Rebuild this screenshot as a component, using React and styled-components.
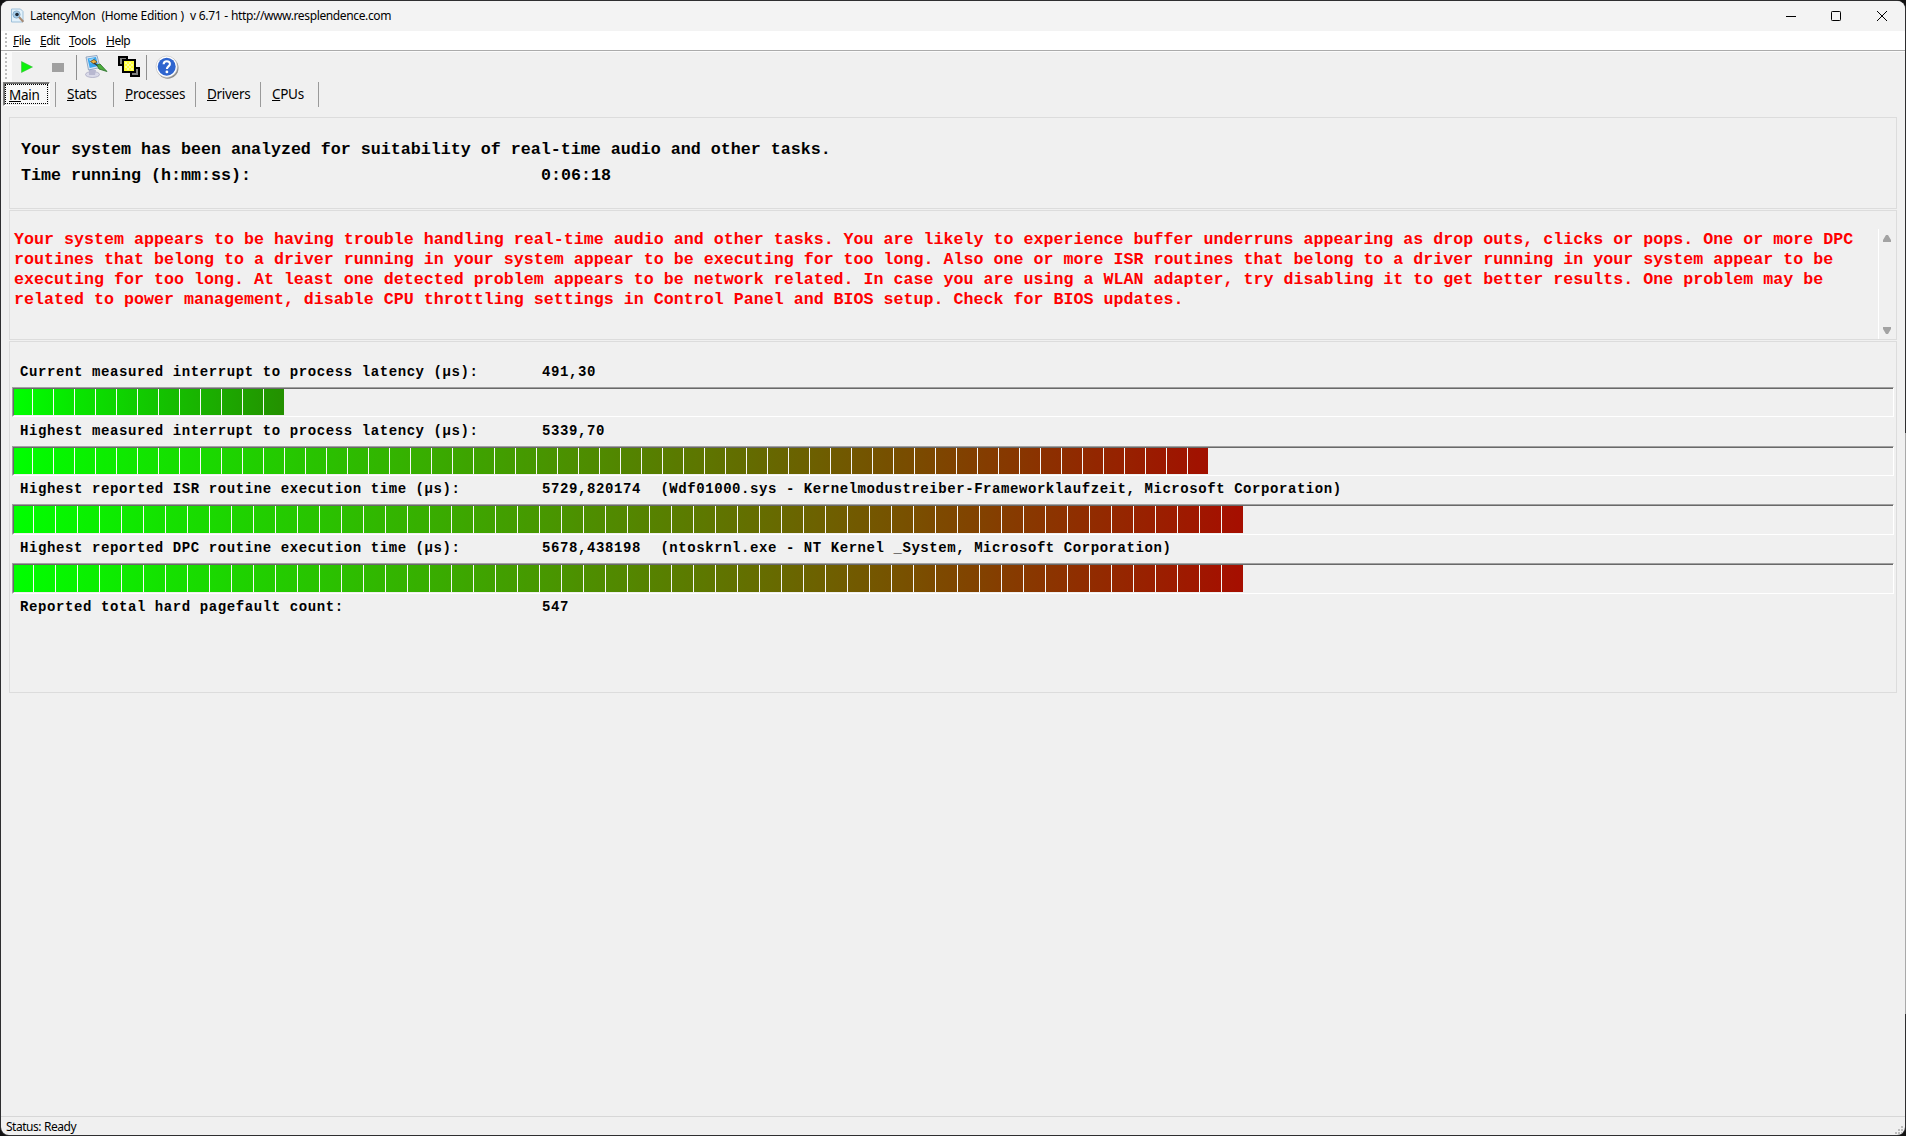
import React from 'react';
import styled, { createGlobalStyle } from 'styled-components';

const Global = createGlobalStyle`
  * { box-sizing: border-box; }
  html, body, #root { height: 100%; margin: 0; }
  body { background: #111; overflow: hidden; }
`;
const UI = '"Noto Sans", "Open Sans", sans-serif';
const MONO = '"Liberation Mono", monospace';

const Frame = styled.div`
  width: 1906px; height: 1136px; padding: 1px;
  border-radius: 9px;
  background:
    linear-gradient(#a9a9a9, #a9a9a9) 100% 433px / 1px 581px no-repeat,
    #2e2e30;
`;
const Window = styled.div`
  height: 100%;
  display: flex; flex-direction: column;
  border-radius: 8px;
  background: #f0f0f0;
  overflow: hidden;
  color: #000;
  font-family: ${UI};
`;
const TitleBar = styled.header`
  height: 30px; flex: none;
  display: flex; align-items: center;
  background: #f3f3f3;
  padding-left: 9px;
  svg { display: block; flex: none; }
`;
const Title = styled.div`
  flex: 1; margin-left: 5px;
  font-size: 12px; line-height: 16px; white-space: pre;
  letter-spacing: -0.37px; word-spacing: 0.4px;
`;
const Caption = styled.div`
  width: ${p => p.$w}px; height: 30px; display: grid; place-items: center;
`;
const MenuBar = styled.nav`
  height: 21px; flex: none;
  display: flex; align-items: center;
  background: #fff;
  border-bottom: 1px solid #fbfbfb;
  box-shadow: inset 0 -1px 0 #ababab;
  gap: 11px;
  font-size: 12px;
`;
const Menu = styled.span`
  letter-spacing: -0.5px; line-height: 16px; width: ${p => p.$w}px; white-space: nowrap;
`;
const Grip = styled.i`
  width: 2px; height: ${p => p.$h}px; flex: none; margin: 0 ${p => p.$after}px 0 4px;
  background: repeating-linear-gradient(#bdbdbd 0 2px, transparent 2px 4px);
`;
const ToolBar = styled.div`
  height: 30px; flex: none;
  display: flex; align-items: center;
  background: linear-gradient(90deg, #fafafa 0 11px, #f0f0f0 11px);
  svg { display: block; flex: none; }
`;
const ToolButton = styled.div`
  width: ${p => p.$w}px; height: 26px; display: grid; place-items: center; flex: none;
`;
const Rule = styled.i`
  width: 1px; height: 25px; background: #8f8f8f; flex: none; margin-left: ${p => p.$gap}px;
`;
const Tabs = styled.div`
  height: 26px; flex: none; display: flex; align-items: flex-start; padding-left: 2px;
`;
const Tab = styled.div`
  height: 25px; width: ${p => p.$w}px; flex: none;
  padding-left: ${p => p.$pad}px;
  border-right: 1px solid #9a9a9a;
  font-size: 13.5px; line-height: 24px; letter-spacing: -0.3px; white-space: nowrap;
`;
const ActiveTab = styled.div`
  width: 47px; height: 24px; flex: none;
  border: 1px solid #fff; border-top-color: #808080; border-left-color: #808080;
  box-shadow: inset 1px 1px 0 #696969;
  padding: 1px;
`;
const Focus = styled.div`
  height: 20px; border: 1px dotted #000; background: #f8f8f8;
  padding-left: 3px; font-size: 13.5px; line-height: 20px; letter-spacing: -0.3px;
`;
const Body = styled.main`
  flex: 1; padding: 9px 8px 0; display: flex; flex-direction: column; gap: 1px;
`;
const Panel = styled.section`
  border: 1px solid #dcdcdc; height: ${p => p.$h}px; flex: none;
`;
const Summary = styled.div`
  padding: 19px 11px; font: bold 16.667px/26px ${MONO}; white-space: pre;
`;
const SummaryRow = styled.div`
  display: grid; grid-template-columns: 520px 1fr;
`;
const Warning = styled.div`
  height: 110px; margin: 18px 0 0 4px; display: flex; justify-content: space-between;
  font: bold 16.667px/20px ${MONO}; color: #f00; white-space: pre;
`;
const WarningText = styled.p`
  margin: 0; padding-top: 1px;
`;
const Scroll = styled.div`
  width: 18px; border-left: 1px solid #fff; flex: none;
  display: flex; flex-direction: column; justify-content: space-between; align-items: center;
  padding: 6px 2px 5px 0;
  svg { display: block; }
`;
const Metrics = styled.div`
  padding: 18px 2px 0;
`;
const MetricLabel = styled.div`
  height: ${p => p.$h}px; padding: ${p => p.$top}px 0 0 8px;
  display: grid; grid-template-columns: 522px auto 1fr;
  font: bold 14px/18px ${MONO}; letter-spacing: 0.59px; white-space: pre;
`;
const Detail = styled.span`
  margin-left: 19.5px; letter-spacing: 0.563px;
`;
const Track = styled.div`
  height: ${p => p.$h}px;
  border-top: 1px solid #a0a0a0; border-left: 1px solid #a0a0a0; border-bottom: 1px solid #fff; border-right: 1px solid #fff;
`;
const Inner = styled.div`
  height: 100%; display: flex; gap: 1px;
  border-top: 1px solid #696969; border-left: 1px solid #696969; border-bottom: 1px solid #f0f0f0;
`;
const Block = styled.i`
  width: ${p => p.$w}px; height: 100%; flex: none;
  box-shadow: 1px 0 0 ${p => (p.$last ? 'transparent' : '#f8f8f8')};
`;
const StatusBar = styled.footer`
  height: 19px; flex: none; display: flex; justify-content: space-between; align-items: flex-start;
  border-top: 1px solid #d7d7d7; padding-left: 5px;
  font-size: 12px; line-height: 20px; letter-spacing: -0.5px; word-spacing: 0.6px;
  svg { display: block; margin: 9px 2px 0 0; }
`;

function mix(a, b, t) {
  return `rgb(${a.map((v, i) => Math.round(v + (b[i] - v) * t)).join(',')})`;
}

function Meter({ h, first, step, count, end }) {
  const total = first + count * step;
  const start = [0, 255, 0];
  const blocks = Array.from({ length: count + 1 }, (_, i) => {
    const x0 = i === 0 ? 0 : first + 1 + (i - 1) * step;
    const w = i === 0 ? first : step - 1;
    return { w, a: mix(start, end, x0 / total), b: mix(start, end, (x0 + w) / total) };
  });
  return (
    <Track $h={h}>
      <Inner>
        {blocks.map((b, i) => (
          <Block key={i} $w={b.w} $last={i === count} style={{ background: `linear-gradient(90deg, ${b.a}, ${b.b})` }} />
        ))}
      </Inner>
    </Track>
  );
}

const Logo = () => (
  <svg width="15" height="16" viewBox="0 0 15 16">
    <path d="M1.5 1h9l2.5 2.5V14H1.5z" fill="#e2f1fb" stroke="#9dbfd9" />
    <circle cx="6.5" cy="6.5" r="3.6" fill="#a5cdea" stroke="#8fb0cb" />
    <circle cx="7" cy="6.5" r="1.8" fill="#202b38" />
    <path d="M9 9l4.3 4.7" stroke="#a88a72" strokeWidth="2" />
  </svg>
);
const Play = () => (
  <svg width="12" height="12"><path d="M0.5 0.5L11.5 6L0.5 11.5Z" fill="#0df20d" stroke="#35b535" strokeWidth=".5" /></svg>
);
const Stop = () => <svg width="12" height="9"><path d="M0 0h12v9H0z" fill="#a0a0a0" /></svg>;
const Options = () => (
  <svg width="24" height="24" viewBox="0 0 24 24">
    <ellipse cx="8.5" cy="19.5" rx="7" ry="3" fill="#d9d9e8" stroke="#a3a3bd" strokeWidth=".7" />
    <path d="M5 14l7 1-1 5H5z" fill="#b8b8d0" />
    <path d="M2 2l11-1.5 3 12L4.5 15z" fill="#dce8f5" stroke="#8097b5" strokeWidth=".8" />
    <path d="M3.5 3.5L12 2l2.4 9L5.7 13z" fill="#3ba7ee" />
    <path d="M5 4l5-1-3 6z" fill="#8fd4ff" />
    <path d="M6.5 6.5l3.5-2 3 2.5-3 2z" fill="#f0b43b" stroke="#6a4b1b" strokeWidth=".8" />
    <path d="M10 8l4 3" stroke="#333" strokeWidth="1.4" />
    <path d="M13 10l3-1 7 7.5-8-2.5z" fill="#4dad3c" stroke="#256d26" strokeWidth=".8" />
  </svg>
);
const Layers = () => (
  <svg width="22" height="22" viewBox="0 0 22 22" shapeRendering="crispEdges">
    <path d="M1 1h8v8H1zM13 12h8v8h-8z" fill="#808080" stroke="#000" strokeWidth="1.5" />
    <path d="M5 4h12v12H5z" fill="#ffff38" stroke="#000" strokeWidth="2" />
    <path d="M7 6h2v2H7zM11 6h2v2h-2zM9 8h2v2H9zM13 8h2v2h-2zM7 10h2v2H7zM11 10h2v2h-2zM9 12h2v2H9zM13 12h2v2h-2z" fill="#ffff9c" />
  </svg>
);
const Help = () => (
  <svg width="24" height="24" viewBox="0 0 24 24">
    <circle cx="12.7" cy="12.9" r="10.8" fill="#8c8c8c" />
    <circle cx="11.7" cy="11.7" r="10.7" fill="#fff" stroke="#bdbdbd" strokeWidth=".6" />
    <circle cx="11.7" cy="11.7" r="9" fill="#2f65cf" />
    <path d="M8.6 9.2c.2-4 6.3-3.8 6.3-.3 0 2.5-3 2.5-3 5.1" fill="none" stroke="#fff" strokeWidth="2.1" />
    <circle cx="11.9" cy="16.9" r="1.4" fill="#fff" />
  </svg>
);

const menus = [['File', 16], ['Edit', 18], ['Tools', 26], ['Help', 23]];
const tabs = [
  ['Stats', 58, 11], ['Processes', 82, 11], ['Drivers', 65, 11], ['CPUs', 58, 11],
];
const warning = [
  'Your system appears to be having trouble handling real-time audio and other tasks. You are likely to experience buffer underruns appearing as drop outs, clicks or pops. One or more DPC',
  'routines that belong to a driver running in your system appear to be executing for too long. Also one or more ISR routines that belong to a driver running in your system appear to be',
  'executing for too long. At least one detected problem appears to be network related. In case you are using a WLAN adapter, try disabling it to get better results. One problem may be',
  'related to power management, disable CPU throttling settings in Control Panel and BIOS setup. Check for BIOS updates.',
].join('\n');
const metrics = [
  { label: 'Current measured interrupt to process latency (µs):', value: '491,30', lh: 27, top: 3, h: 30, first: 18, step: 21, count: 12, end: [36, 144, 0] },
  { label: 'Highest measured interrupt to process latency (µs):', value: '5339,70', lh: 29, top: 5, h: 30, first: 18, step: 21, count: 56, end: [162, 16, 0] },
  { label: 'Highest reported ISR routine execution time (µs):', value: '5729,820174', detail: '(Wdf01000.sys - Kernelmodustreiber-Frameworklaufzeit, Microsoft Corporation)', lh: 28, top: 4, h: 31, first: 19, step: 22, count: 55, end: [166, 14, 0] },
  { label: 'Highest reported DPC routine execution time (µs):', value: '5678,438198', detail: '(ntoskrnl.exe - NT Kernel _System, Microsoft Corporation)', lh: 28, top: 4, h: 31, first: 19, step: 22, count: 55, end: [166, 14, 0] },
];

export default function App() {
  return (
    <>
      <Global />
      <Frame>
        <Window>
          <TitleBar>
            <Logo />
            <Title>{'LatencyMon  (Home Edition )  v 6.71 - http://www.resplendence.com'}</Title>
            <Caption $w={45}><svg width="10" height="10"><path d="M0 5.5h10" stroke="#000" /></svg></Caption>
            <Caption $w={46}><svg width="10" height="10"><rect x=".5" y=".5" width="9" height="9" rx=".8" fill="none" stroke="#000" /></svg></Caption>
            <Caption $w={46}><svg width="10" height="10"><path d="M0 0l10 10M10 0L0 10" stroke="#000" /></svg></Caption>
          </TitleBar>
          <MenuBar>
            <Grip $h={16} $after={-5} />
            {menus.map(([name, w]) => (
              <Menu key={name} $w={w}><u>{name[0]}</u>{name.slice(1)}</Menu>
            ))}
          </MenuBar>
          <ToolBar>
            <Grip $h={28} $after={4} />
            <ToolButton $w={31}><Play /></ToolButton>
            <ToolButton $w={32}><Stop /></ToolButton>
            <Rule $gap={2} />
            <ToolButton $w={37}><Options /></ToolButton>
            <ToolButton $w={29}><Layers /></ToolButton>
            <Rule $gap={3} />
            <ToolButton $w={39}><Help /></ToolButton>
          </ToolBar>
          <Tabs>
            <ActiveTab><Focus><u>M</u>ain</Focus></ActiveTab>
            <Tab $w={6} $pad={0} />
            {tabs.map(([name, w, pad]) => (
              <Tab key={name} $w={w} $pad={pad}><u>{name[0]}</u>{name.slice(1)}</Tab>
            ))}
          </Tabs>
          <Body>
            <Panel $h={92}>
              <Summary>
                <div>Your system has been analyzed for suitability of real-time audio and other tasks.</div>
                <SummaryRow><span>Time running (h:mm:ss):</span><span>0:06:18</span></SummaryRow>
              </Summary>
            </Panel>
            <Panel $h={130}>
              <Warning>
                <WarningText>{warning}</WarningText>
                <Scroll>
                  <svg width="8" height="7"><path d="M3 0h2l3 5v2H0V5z" fill="#a3a3a3" /></svg>
                  <svg width="8" height="7"><path d="M0 0h8v2L5 7H3L0 2z" fill="#a3a3a3" /></svg>
                </Scroll>
              </Warning>
            </Panel>
            <Panel $h={352}>
              <Metrics>
                {metrics.map(m => (
                  <React.Fragment key={m.label}>
                    <MetricLabel $h={m.lh} $top={m.top}>
                      <span>{m.label}</span><span>{m.value}</span>
                      {m.detail && <Detail>{m.detail}</Detail>}
                    </MetricLabel>
                    <Meter {...m} />
                  </React.Fragment>
                ))}
                <MetricLabel $h={28} $top={4}><span>Reported total hard pagefault count:</span><span>547</span></MetricLabel>
              </Metrics>
            </Panel>
          </Body>
          <StatusBar>
            <span>Status: Ready</span>
            <svg width="8" height="8" viewBox="0 0 8 8"><path d="M6 0h2v2H6zM3 3h2v2H3zM6 3h2v2H6zM0 6h2v2H0zM3 6h2v2H3zM6 6h2v2H6z" fill="#bdbdbd" /></svg>
          </StatusBar>
        </Window>
      </Frame>
    </>
  );
}
